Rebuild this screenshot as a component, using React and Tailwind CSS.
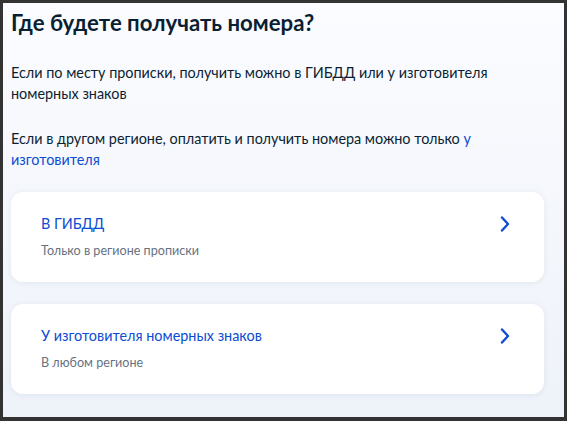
import React from "react";

function Chevron() {
  return (
    <svg width="10" height="16" viewBox="0 0 10 16" fill="none" className="shrink-0">
      <path d="M2 1.5 L8 8 L2 14.5" stroke="#0d4cd3" strokeWidth="2.4" strokeLinecap="round" strokeLinejoin="round" />
    </svg>
  );
}

function Option({ title, hint }) {
  return (
    <div className="flex items-start justify-between rounded-[12px] bg-white pl-[30px] pr-[34px] pt-[22px] pb-[23px] shadow-[0_1px_6px_rgba(30,60,120,0.08)]">
      <div className="flex flex-col">
        <div className="text-[14.4px] leading-[20px] text-[#0d4cd3]">{title}</div>
        <div className="mt-[9px] text-[12.6px] leading-[16px] text-[#66727f]">{hint}</div>
      </div>
      <div className="pt-[2px]">
        <Chevron />
      </div>
    </div>
  );
}

export default function App() {
  return (
    <div
      className="box-border h-[421px] w-[567px] border-t-[3px] border-l-[3px] border-r-[3px] border-b-[4px] border-[#333333] bg-gradient-to-b from-[#fbfcff] to-[#eef2f9] pl-[8px] pr-[20px] text-[#0b1f33]"
      style={{ fontFamily: "Lato, 'Noto Sans', sans-serif" }}
    >
      <h1 className="mt-[6px] text-[22.2px] font-bold leading-[28px]">Где будете получать номера?</h1>
      <p className="mt-[25px] text-[14.4px] leading-[21px]">
        Если по месту прописки, получить можно в ГИБДД или у изготовителя номерных знаков
      </p>
      <p className="mt-[24px] text-[14.4px] leading-[21px]">
        Если в другом регионе, оплатить и получить номера можно только{" "}
        <span className="text-[#0d4cd3]">у изготовителя</span>
      </p>
      <div className="mt-[22px] flex flex-col gap-[22px]">
        <Option title="В ГИБДД" hint="Только в регионе прописки" />
        <Option title="У изготовителя номерных знаков" hint="В любом регионе" />
      </div>
    </div>
  );
}
